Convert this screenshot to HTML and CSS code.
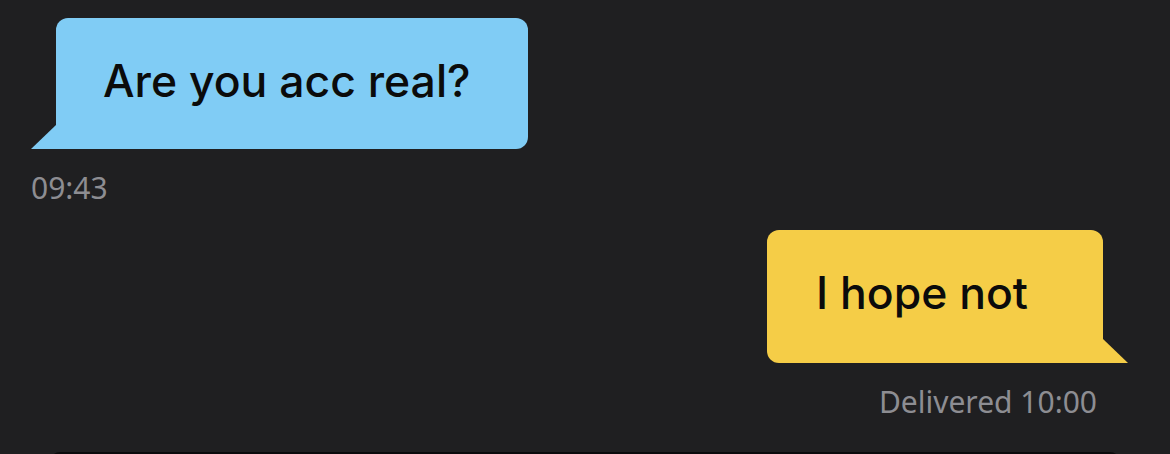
FILE: index.html
```html
<!DOCTYPE html>
<html lang="en">
<head>
    <meta charset="UTF-8">
    <meta name="viewport" content="width=device-width, initial-scale=1.0">
    <title>Chat</title>
    <link rel="stylesheet" href="styles.css">
</head>
<body>

    <!-- Message thread -->
    <section class="thread">
        <div class="message incoming">
            <div class="bubble">Are you acc real?</div>
            <p class="meta">09:43</p>
        </div>

        <div class="message outgoing">
            <div class="bubble">I hope not</div>
            <p class="meta">Delivered 10:00</p>
        </div>
    </section>

    <!-- Composer (only its top edge is visible) -->
    <div class="composer"></div>

</body>
</html>
```

FILE: styles.css
```css
html, body {
    height: 100%;
}

body {
    font-family: "Noto Sans", "Open Sans", sans-serif;
    background-color: #1f1f21;
    margin: 0;
    padding: 0;
    overflow: hidden;
}

.thread {
    display: flex;
    flex-direction: column;
    padding-top: 18px;
}

.message {
    display: flex;
    flex-direction: column;
}

.bubble {
    position: relative;
    font-family: Inter, "Noto Sans", sans-serif;
    font-size: 44.5px;
    font-weight: 500;
    line-height: 60px;
    color: #0b0b0b;
    padding: 33px 57px 38px 47px;
    border-radius: 12px;
}

.bubble::before {
    content: "";
    position: absolute;
    bottom: 0;
    width: 25px;
    height: 24px;
}

.incoming {
    align-items: flex-start;
}

.incoming .bubble {
    background-color: #80ccf5;
    margin-left: 56px;
    border-bottom-left-radius: 0;
}

.incoming .bubble::before {
    left: -25px;
    background-color: #80ccf5;
    clip-path: polygon(100% 0, 100% 100%, 0 100%);
}

.incoming .meta {
    margin-left: 31px;
}

.outgoing {
    align-items: flex-end;
    margin-top: 24px;
}

.outgoing .bubble {
    background-color: #f5cd47;
    margin-right: 67px;
    padding-left: 49px;
    padding-right: 75px;
    padding-bottom: 40px;
    border-bottom-right-radius: 0;
}

.outgoing .bubble::before {
    right: -25px;
    background-color: #f5cd47;
    clip-path: polygon(0 0, 100% 100%, 0 100%);
}

.outgoing .meta {
    margin-right: 73px;
}

.meta {
    font-size: 30px;
    line-height: 36px;
    color: #8d8d92;
    margin: 21px 0 0;
}

.composer {
    height: 40px;
    margin: 32px 50px 0;
    background-color: #0b0b0c;
    border-radius: 10px 10px 0 0;
}
```
